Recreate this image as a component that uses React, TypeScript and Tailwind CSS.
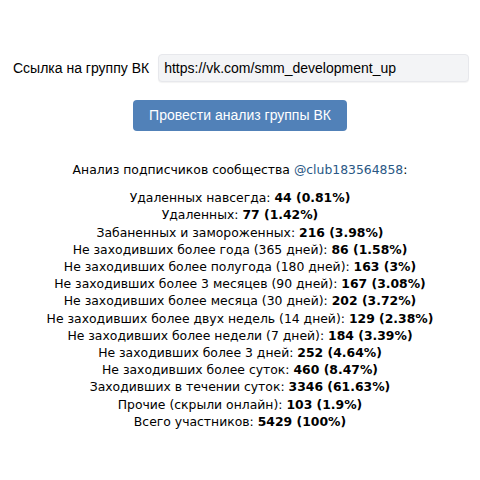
const rows: Array<[string, string]> = [
  ["Удаленных навсегда", "44 (0.81%)"],
  ["Удаленных", "77 (1.42%)"],
  ["Забаненных и замороженных", "216 (3.98%)"],
  ["Не заходивших более года (365 дней)", "86 (1.58%)"],
  ["Не заходивших более полугода (180 дней)", "163 (3%)"],
  ["Не заходивших более 3 месяцев (90 дней)", "167 (3.08%)"],
  ["Не заходивших более месяца (30 дней)", "202 (3.72%)"],
  ["Не заходивших более двух недель (14 дней)", "129 (2.38%)"],
  ["Не заходивших более недели (7 дней)", "184 (3.39%)"],
  ["Не заходивших более 3 дней", "252 (4.64%)"],
  ["Не заходивших более суток", "460 (8.47%)"],
  ["Заходивших в течении суток", "3346 (61.63%)"],
  ["Прочие (скрыли онлайн)", "103 (1.9%)"],
  ["Всего участников", "5429 (100%)"],
];

export default function App() {
  return (
    <div className="w-[480px] h-[480px] bg-white text-black">
      <div className="flex items-center gap-[9px] pl-[13px] pr-[11px] pt-[54px] font-['Liberation_Sans',Arial,sans-serif] text-[14px]">
        <label className="shrink-0">Ссылка на группу ВК</label>
        <div className="flex-1 h-[28px] flex items-center px-[5px] rounded-[4px] border border-[#e7e8ec] bg-[#f3f4f6] shadow-[0_1px_1px_rgba(0,0,0,0.05)]">
          https://vk.com/smm_development_up
        </div>
      </div>
      <div className="flex justify-center pt-[18px]">
        <button className="w-[214px] h-[31px] rounded-[4px] bg-[#5181b8] text-white text-[14px] font-['Liberation_Sans',Arial,sans-serif]">
          Провести анализ группы ВК
        </button>
      </div>
      <div className="mt-[30px] text-center text-[12.4px] leading-[17.2px] font-['DejaVu_Sans',Verdana,sans-serif] text-black">
        <p>
          Анализ подписчиков сообщества <a className="text-[#2a5885]">@club183564858</a>:
        </p>
        <div className="mt-[11px]">
          {rows.map(([label, value], i) => (
            // biome-ignore lint/suspicious/noArrayIndexKey: static list
            <p key={i}>
              {label}: <b>{value}</b>
            </p>
          ))}
        </div>
      </div>
    </div>
  );
}
